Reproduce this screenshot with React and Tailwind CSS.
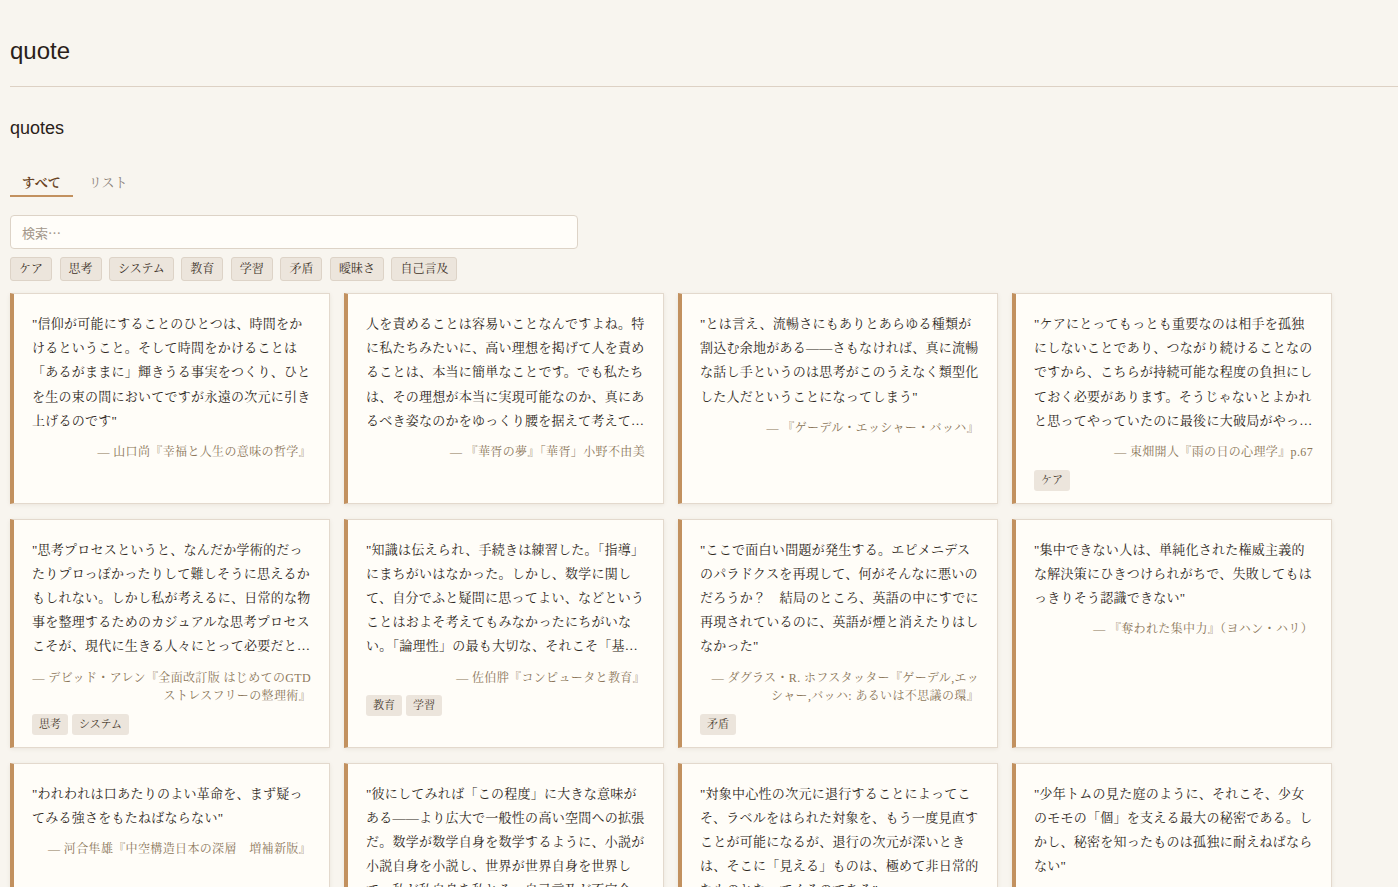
import React, { useState } from "react";

const tags = ["ケア", "思考", "システム", "教育", "学習", "矛盾", "曖昧さ", "自己言及"];

const quotes = [
  {
    id: 1,
    text: "\"信仰が可能にすることのひとつは、時間をかけるということ。そして時間をかけることは「あるがままに」輝きうる事実をつくり、ひとを生の束の間においてですが永遠の次元に引き上げるのです\"",
    source: "— 山口尚『幸福と人生の意味の哲学』",
    tags: [],
  },
  {
    id: 2,
    text: "人を責めることは容易いことなんですよね。特に私たちみたいに、高い理想を掲げて人を責めることは、本当に簡単なことです。でも私たちは、その理想が本当に実現可能なのか、真にあるべき姿なのかをゆっくり腰を据えて考えてみる必要があるんです。",
    source: "— 『華胥の夢』「華胥」小野不由美",
    tags: [],
  },
  {
    id: 3,
    text: "\"とは言え、流暢さにもありとあらゆる種類が割込む余地がある——さもなければ、真に流暢な話し手というのは思考がこのうえなく類型化した人だということになってしまう\"",
    source: "— 『ゲーデル・エッシャー・バッハ』",
    tags: [],
  },
  {
    id: 4,
    text: "\"ケアにとってもっとも重要なのは相手を孤独にしないことであり、つながり続けることなのですから、こちらが持続可能な程度の負担にしておく必要があります。そうじゃないとよかれと思ってやっていたのに最後に大破局がやってきます\"",
    source: "— 東畑開人『雨の日の心理学』p.67",
    tags: ["ケア"],
  },
  {
    id: 5,
    text: "\"思考プロセスというと、なんだか学術的だったりプロっぽかったりして難しそうに思えるかもしれない。しかし私が考えるに、日常的な物事を整理するためのカジュアルな思考プロセスこそが、現代に生きる人々にとって必要だと思うのだ\"",
    source: "— デビッド・アレン『全面改訂版 はじめてのGTD ストレスフリーの整理術』",
    tags: ["思考", "システム"],
  },
  {
    id: 6,
    text: "\"知識は伝えられ、手続きは練習した。「指導」にまちがいはなかった。しかし、数学に関して、自分でふと疑問に思ってよい、などということはおよそ考えてもみなかったにちがいない。「論理性」の最も大切な、それこそ「基本」が抜け落ちていたのである\"",
    source: "— 佐伯胖『コンピュータと教育』",
    tags: ["教育", "学習"],
  },
  {
    id: 7,
    text: "\"ここで面白い問題が発生する。エピメニデスのパラドクスを再現して、何がそんなに悪いのだろうか？　結局のところ、英語の中にすでに再現されているのに、英語が煙と消えたりはしなかった\"",
    source: "— ダグラス・R. ホフスタッター『ゲーデル,エッシャー,バッハ: あるいは不思議の環』",
    tags: ["矛盾"],
  },
  {
    id: 8,
    text: "\"集中できない人は、単純化された権威主義的な解決策にひきつけられがちで、失敗してもはっきりそう認識できない\"",
    source: "— 『奪われた集中力』（ヨハン・ハリ）",
    tags: [],
  },
  {
    id: 9,
    text: "\"われわれは口あたりのよい革命を、まず疑ってみる強さをもたねばならない\"",
    source: "— 河合隼雄『中空構造日本の深層　増補新版』",
    tags: [],
  },
  {
    id: 10,
    text: "\"彼にしてみれば「この程度」に大きな意味がある——より広大で一般性の高い空間への拡張だ。数学が数学自身を数学するように、小説が小説自身を小説し、世界が世界自身を世界して、私が私自身を私とる。自己言及が不完全性を生む\"",
    source: "— 『ゲーデル・エッシャー・バッハ』",
    tags: ["自己言及"],
  },
  {
    id: 11,
    text: "\"対象中心性の次元に退行することによってこそ、ラベルをはられた対象を、もう一度見直すことが可能になるが、退行の次元が深いときは、そこに「見える」ものは、極めて非日常的なものとなってくるのである\"",
    source: "— 河合隼雄『子どもの宇宙』",
    tags: ["曖昧さ"],
  },
  {
    id: 12,
    text: "\"少年トムの見た庭のように、それこそ、少女のモモの「個」を支える最大の秘密である。しかし、秘密を知ったものは孤独に耐えねばならない\"",
    source: "— 河合隼雄『子どもの宇宙』",
    tags: [],
  },
];

const serif = "font-['Liberation_Serif','Noto_Serif_CJK_JP','Noto_Sans_CJK_JP',serif]";

const QuoteCard = ({ quote }) => (
  <div className="bg-[#fffdf8] border border-[#e3d9cd] border-l-4 border-l-[#c2915f] px-[18px] pt-[18px] pb-[12px] shadow-[0_1px_4px_rgba(120,90,60,0.10)]">
    <p className={`${serif} text-[13px] leading-[24.2px] tracking-[0.02em] text-[#2d2620] line-clamp-5`}>
      {quote.text}
    </p>
    <p className={`${serif} mt-[10px] text-right text-[12px] leading-[18.5px] tracking-[0.03em] text-[#8b7659]`}>
      {quote.source}
    </p>
    {quote.tags.length > 0 && (
      <div className="flex gap-[4px] mt-[8px]">
        {quote.tags.map((t) => (
          <span
            key={t}
            className={`${serif} bg-[#ece5dc] rounded-[3px] px-[7px] py-[3px] text-[11px] leading-[15px] text-[#4a3d30]`}
          >
            {t}
          </span>
        ))}
      </div>
    )}
  </div>
);

const App = () => {
  const [tab, setTab] = useState("all");

  return (
    <div className="min-h-screen bg-[#f8f5ef] pl-[10px] pb-10 overflow-hidden">
      {/* Header */}
      <div className="border-b border-[#ddd1c4] pt-[37px] pb-[21px]">
        <h1 className="font-['Liberation_Sans',sans-serif] text-[24px] leading-[28px] text-[#2a2119]">quote</h1>
      </div>

      <h2 className="mt-[29px] font-['Liberation_Sans',sans-serif] text-[18px] leading-[24px] text-[#2a2119]">
        quotes
      </h2>

      {/* Tabs */}
      <div className="mt-[27px] flex gap-1">
        <button
          onClick={() => setTab("all")}
          className={`${serif} px-3 pt-[6px] pb-[2px] text-[13px] leading-[20px] border-b-2 ${
            tab === "all" ? "border-[#c2915f] font-bold text-[#6b4526]" : "border-transparent text-[#8a8078]"
          }`}
        >
          すべて
        </button>
        <button
          onClick={() => setTab("list")}
          className={`${serif} px-3 pt-[6px] pb-[2px] text-[13px] leading-[20px] border-b-2 ${
            tab === "list" ? "border-[#c2915f] font-bold text-[#6b4526]" : "border-transparent text-[#8a8078]"
          }`}
        >
          リスト
        </button>
      </div>

      {/* Search */}
      <input
        type="text"
        placeholder="検索…"
        className="font-['Noto_Sans_CJK_JP',sans-serif] mt-[18px] block w-[568px] h-[34px] bg-[#fffdf9] border border-[#ddd3c7] rounded-[4px] px-[11px] text-[13px] text-[#2d2620] placeholder:text-[#a3978a] outline-none"
      />

      {/* Tag filters */}
      <div className="mt-[8px] flex gap-[7.5px]">
        {tags.map((t) => (
          <button
            key={t}
            className={`${serif} bg-[#ece5dc] border border-[#ddd3c7] rounded-[3px] px-2 py-[2px] text-[12px] leading-[18px] text-[#3d3228]`}
          >
            {t}
          </button>
        ))}
      </div>

      {/* Cards */}
      <div className="mt-[12px] grid grid-cols-[repeat(4,320px)] gap-x-[14px] gap-y-[15px]">
        {quotes.map((q) => (
          <QuoteCard key={q.id} quote={q} />
        ))}
      </div>
    </div>
  );
};

export default App;
